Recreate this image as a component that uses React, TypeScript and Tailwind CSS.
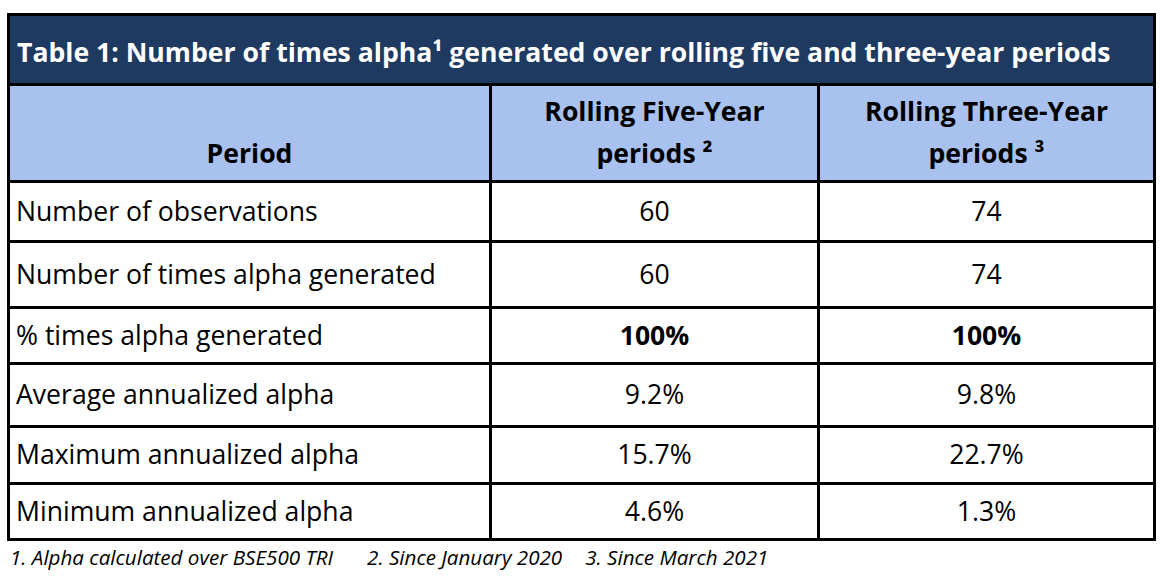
export default function App() {
  const rows = [
    { label: "Number of observations", five: "60", three: "74", h: "h-[60px]" },
    { label: "Number of times alpha generated", five: "60", three: "74", h: "h-[66px]" },
    { label: "% times alpha generated", five: "100%", three: "100%", h: "h-[56px]", bold: true },
    { label: "Average annualized alpha", five: "9.2%", three: "9.8%", h: "h-[63px]" },
    { label: "Maximum annualized alpha", five: "15.7%", three: "22.7%", h: "h-[57px]" },
    { label: "Minimum annualized alpha", five: "4.6%", three: "1.3%", h: "h-[56px]" },
  ];

  return (
    <div className="bg-white w-[1160px] h-[576px] pt-[13px] pl-[7px] font-['Open_Sans',sans-serif] text-black">
      <table className="w-[1146px] border-collapse table-fixed">
        <colgroup>
          <col className="w-[482px]" />
          <col className="w-[328px]" />
          <col className="w-[336px]" />
        </colgroup>
        <thead>
          <tr className="h-[70px]">
            <th
              colSpan={3}
              className="bg-[#1f3a60] border-[3px] border-black text-left pl-[7px] pt-[6px] text-[26.6px] font-bold text-white"
            >
              Table 1: Number of times alpha¹ generated over rolling five and three-year periods
            </th>
          </tr>
          <tr className="h-[97px] bg-[#a8c1ee] text-[26.6px] font-bold leading-[42px]">
            <th className="border-[3px] border-black align-bottom pb-[6px]">Period</th>
            <th className="border-[3px] border-black align-bottom pb-[6px]">
              Rolling Five-Year
              <br />
              periods ²
            </th>
            <th className="border-[3px] border-black align-bottom pb-[6px]">
              Rolling Three-Year
              <br />
              periods ³
            </th>
          </tr>
        </thead>
        <tbody className="text-[26.6px]">
          {rows.map((r) => (
            <tr key={r.label} className={r.h}>
              <td className="border-[3px] border-black pl-[6px] align-middle">{r.label}</td>
              <td className={`border-[3px] border-black text-center align-middle ${r.bold ? "font-bold" : ""}`}>
                {r.five}
              </td>
              <td className={`border-[3px] border-black text-center align-middle ${r.bold ? "font-bold" : ""}`}>
                {r.three}
              </td>
            </tr>
          ))}
        </tbody>
      </table>
      <div className="mt-[1px] pl-[3px] text-[20.6px] italic flex">
        <span>1. Alpha calculated over BSE500 TRI</span>
        <span className="ml-[34px]">2. Since January 2020</span>
        <span className="ml-[23px]">3. Since March 2021</span>
      </div>
    </div>
  );
}
